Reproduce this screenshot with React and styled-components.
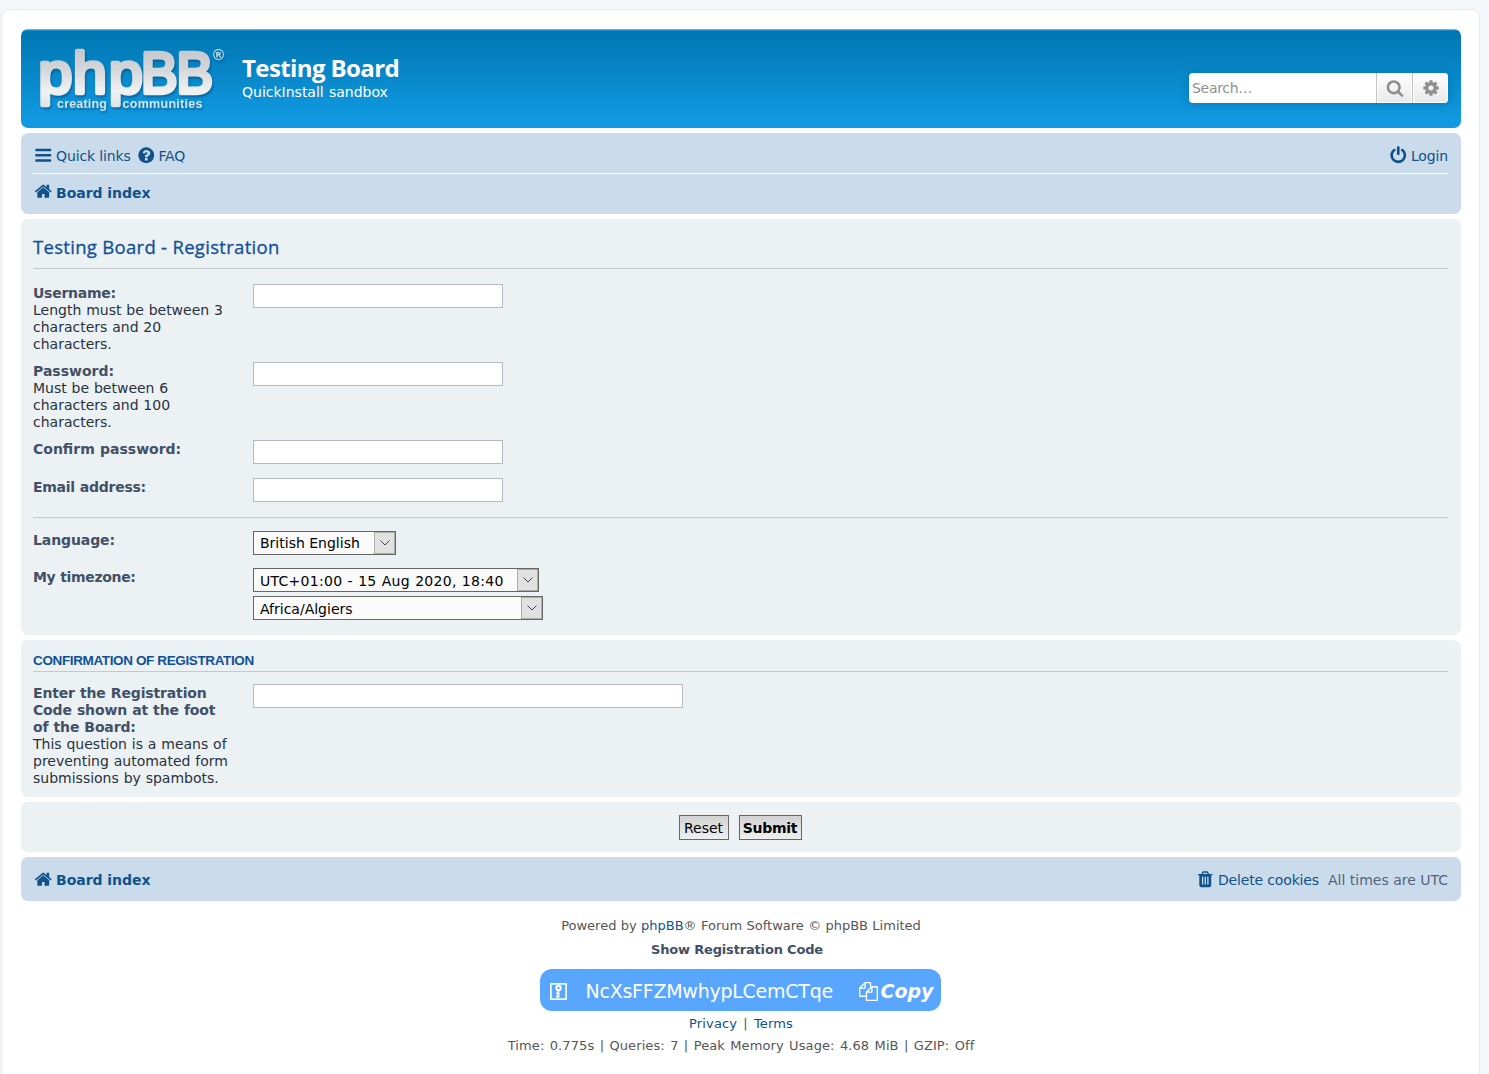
import React from 'react';
import styled, { createGlobalStyle } from 'styled-components';

const ICONS = {
  bars:
    'M1664 1344v128q0 26-19 45t-45 19h-1408q-26 0-45-19t-19-45v-128q0-26 19-45t45-19h1408q26 0 45 19t19 45zm0-512v128q0 26-19 45t-45 19h-1408q-26 0-45-19t-19-45v-128q0-26 19-45t45-19h1408q26 0 45 19t19 45zm0-512v128q0 26-19 45t-45 19h-1408q-26 0-45-19t-19-45v-128q0-26 19-45t45-19h1408q26 0 45 19t19 45z',
  question:
    'M1024 1376v-192q0-14-9-23t-23-9h-192q-14 0-23 9t-9 23v192q0 14 9 23t23 9h192q14 0 23-9t9-23zm256-672q0-88-55.5-163t-138.5-116-170-41q-243 0-371 213-15 24 8 42l132 100q7 6 19 6 16 0 25-12 53-68 86-92 34-24 86-24 48 0 85.5 26t37.5 59q0 38-20 61t-68 45q-63 28-115.5 86.5t-52.5 125.5v36q0 14 9 23t23 9h192q14 0 23-9t9-23q0-19 21.5-49.5t54.5-49.5q32-18 49-28.5t46-35 44.5-48 28-60.5 12.5-81zm384 192q0 209-103 385.5t-279.5 279.5-385.5 103-385.5-103-279.5-279.5-103-385.5 103-385.5 279.5-279.5 385.5-103 385.5 103 279.5 279.5 103 385.5z',
  home:
    'M1472 992v480q0 26-19 45t-45 19h-384v-384h-256v384h-384q-26 0-45-19t-19-45v-480q0-1 .5-3t.5-3l575-474 575 474q1 2 1 6zm223-69l-62 74q-8 9-21 11h-3q-13 0-21-7l-692-577-692 577q-12 8-24 7-13-2-21-11l-62-74q-8-10-7-23.5t11-21.5l719-599q32-26 76-26t76 26l244 204v-195q0-14 9-23t23-9h192q14 0 23 9t9 23v408l219 182q10 8 11 21.5t-7 23.5z',
  power:
    'M1664 896q0 156-61 298t-164 245-245 164-298 61-298-61-245-164-164-245-61-298q0-182 80.5-343t226.5-270q43-32 95.5-25t83.5 50q32 42 24.5 94.5t-49.5 84.5q-98 74-151.5 181t-53.5 228q0 104 40.5 198.5t109.5 163.5 163.5 109.5 198.5 40.5 198.5-40.5 163.5-109.5 109.5-163.5 40.5-198.5q0-121-53.5-228t-151.5-181q-42-32-49.5-84.5t24.5-94.5q31-43 84-50t95 25q146 109 226.5 270t80.5 343zm-640-768v640q0 52-38 90t-90 38-90-38-38-90v-640q0-52 38-90t90-38 90 38 38 90z',
  trash:
    'M704 1376v-704q0-14-9-23t-23-9h-64q-14 0-23 9t-9 23v704q0 14 9 23t23 9h64q14 0 23-9t9-23zm256 0v-704q0-14-9-23t-23-9h-64q-14 0-23 9t-9 23v704q0 14 9 23t23 9h64q14 0 23-9t9-23zm256 0v-704q0-14-9-23t-23-9h-64q-14 0-23 9t-9 23v704q0 14 9 23t23 9h64q14 0 23-9t9-23zm-544-992h448l-48-117q-7-9-17-11h-317q-10 2-17 11zm928 32v64q0 14-9 23t-23 9h-96v948q0 83-47 143.5t-113 60.5h-832q-66 0-113-58.5t-47-141.5v-952h-96q-14 0-23-9t-9-23v-64q0-14 9-23t23-9h309l70-167q15-37 54-63t79-26h320q40 0 79 26t54 63l70 167h309q14 0 23 9t9 23z',
  search:
    'M1216 832q0-185-131.5-316.5t-316.5-131.5-316.5 131.5-131.5 316.5 131.5 316.5 316.5 131.5 316.5-131.5 131.5-316.5zm512 832q0 52-38 90t-90 38q-54 0-90-38l-343-342q-179 124-399 124-143 0-273.5-55.5t-225-150-150-225-55.5-273.5 55.5-273.5 150-225 225-150 273.5-55.5 273.5 55.5 225 150 150 225 55.5 273.5q0 220-124 399l343 343q37 37 37 90z',
  cog:
    'M1152 896q0-106-75-181t-181-75-181 75-75 181 75 181 181 75 181-75 75-181zm512-109v222q0 12-8 23t-20 13l-185 28q-19 54-39 91 35 50 107 138 10 12 10 25t-9 23q-27 37-99 108t-94 71q-12 0-26-9l-138-108q-44 23-91 38-16 136-29 186-7 28-36 28h-222q-14 0-24.5-8.5t-11.5-21.5l-28-184q-49-16-90-37l-141 107q-10 9-25 9-14 0-25-11-126-114-165-168-7-10-7-23 0-12 8-23 15-21 51-66.5t54-70.5q-27-50-41-99l-183-27q-13-2-21-12.5t-8-23.5v-222q0-12 8-23t19-13l186-28q14-46 39-92-40-57-107-138-10-12-10-24 0-10 9-23 26-36 98.5-107.5t94.5-71.5q13 0 26 10l138 107q44-23 91-38 16-136 29-186 7-28 36-28h222q14 0 24.5 8.5t11.5 21.5l28 184q49 16 90 37l142-107q9-9 24-9 13 0 25 10 129 119 165 170 7 8 7 22 0 12-8 23-15 21-51 66.5t-54 70.5q26 50 41 98l183 28q13 2 21 12.5t8 23.5z',
  copy:
    'M1696 384q40 0 68 28t28 68v1216q0 40-28 68t-68 28h-960q-40 0-68-28t-28-68v-288h-544q-40 0-68-28t-28-68v-672q0-40 20-88t48-76l408-408q28-28 76-48t88-20h416q40 0 68 28t28 68v328q68-40 128-40h416zm-544 213l-299 299h299v-299zm-640-384l-299 299h299v-299zm196 647l316-316v-416h-384v416q0 40-28 68t-68 28h-416v640h512v-256q0-40 20-88t48-76zm956 804v-1152h-384v416q0 40-28 68t-68 28h-416v640h896z',
};

const Icon = ({ name, size = 18.5 }) => (
  <IconSvg $size={size} viewBox="0 0 1792 1792">
    <path d={ICONS[name]} />
  </IconSvg>
);

// x position, advance width and font size of each letter in the wordmark
const LETTERS = [
  ['p', -0.5, 33.7, 58],
  ['h', 34, 33.7, 58],
  ['p', 70, 33.7, 58],
  ['B', 102, 36.5, 57],
  ['B', 137.5, 36.5, 57],
];

const Logo = () => (
  <LogoSvg viewBox="0 0 190 68">
    <defs>
      <linearGradient id="metal" gradientUnits="userSpaceOnUse" x1="0" y1="0" x2="0" y2="58">
        <stop offset="0" stopColor="#c3c7cb" />
        <stop offset="0.35" stopColor="#d3d6d9" />
        <stop offset="0.75" stopColor="#f0f1f3" />
        <stop offset="1" stopColor="#e0e3e6" />
      </linearGradient>
    </defs>
    {LETTERS.map(([letter, x, width, size]) => (
      <React.Fragment key={x}>
        <LogoText
          x={x}
          y="44.5"
          fontSize={size}
          textLength={width}
          lengthAdjust="spacingAndGlyphs"
        >
          {letter}
        </LogoText>
      </React.Fragment>
    ))}
    <LogoSmall x="18" y="59.5" fontSize="12.5" textLength="50">
      creating
    </LogoSmall>
    <LogoSmall x="83.5" y="59.5" fontSize="12.5" textLength="80">
      communities
    </LogoSmall>
    <LogoSmall x="174" y="12" fontSize="15">
      ®
    </LogoSmall>
  </LogoSvg>
);

const KeyIcon = () => (
  <svg width="17" height="17" viewBox="0 0 17 17" fill="none" stroke="#fff">
    <rect x="0.9" y="0.9" width="15.2" height="15.2" strokeWidth="1.6" />
    <circle cx="8.5" cy="5" r="2.2" strokeWidth="2" />
    <path d="M8.5 7v7.5M8.5 10.3h-2.4M8.5 13.6h-2.4" strokeWidth="1.8" />
  </svg>
);

const Select = ({ width, tracking, low, children }) => (
  <SelectBox $width={width}>
    <SelectValue $tracking={tracking} $low={low}>
      {children}
    </SelectValue>
    <SelectArrow>
      <svg width="10" height="6" viewBox="0 0 10 6" fill="none" stroke="#444">
        <path d="M0.5 0.5L5 5L9.5 0.5" />
      </svg>
    </SelectArrow>
  </SelectBox>
);

const Field = ({ label, tracking, hint, height, children }) => (
  <Row $height={height}>
    <Term>
      <Label $tracking={tracking}>{label}</Label>
      {hint}
    </Term>
    <Controls>{children}</Controls>
  </Row>
);

const App = () => {
  return (
    <>
      <GlobalStyle />
      <Wrap>
        <Header>
          <Logo />
          <SiteDescription>
            <SiteTitle>Testing Board</SiteTitle>
            <Tagline>QuickInstall sandbox</Tagline>
          </SiteDescription>
          <SearchBox>
            <SearchInput placeholder="Search…" />
            <SearchButton>
              <Icon name="search" size={18} />
            </SearchButton>
            <SearchButton>
              <Icon name="cog" size={18} />
            </SearchButton>
          </SearchBox>
        </Header>

        <NavBar>
          <NavRow $height={35} $divider>
            <NavLink>
              <Icon name="bars" />
              <NavText>Quick links</NavText>
            </NavLink>
            <NavLink>
              <Icon name="question" />
              <NavText>FAQ</NavText>
            </NavLink>
            <Spacer />
            <NavLink>
              <Icon name="power" />
              <NavText>Login</NavText>
            </NavLink>
          </NavRow>
          <NavRow $height={36}>
            <NavLink $bold>
              <Icon name="home" />
              <NavText>Board index</NavText>
            </NavLink>
          </NavRow>
        </NavBar>

        <Panel $height={416}>
          <Title>Testing Board - Registration</Title>
          <Fields $top={15}>
            <Field
              label="Username:"
              tracking={-0.25}
              hint="Length must be between 3 characters and 20 characters."
              height={78}
            >
              <Input />
            </Field>
            <Field
              label="Password:"
              hint="Must be between 6 characters and 100 characters."
              height={78}
            >
              <Input type="password" />
            </Field>
            <Field label="Confirm password:" height={38}>
              <Input type="password" />
            </Field>
            <Field label="Email address:" tracking={-0.27} height={39}>
              <Input />
            </Field>
          </Fields>
          <Rule />
          <Fields $top={13}>
            <Field label="Language:" tracking={-0.1} height={37}>
              <Select width={143}>British English</Select>
            </Field>
            <Field label="My timezone:" tracking={-0.35} height={52}>
              <Select width={286} tracking={0.28} low>
                UTC+01:00 - 15 Aug 2020, 18:40
              </Select>
              <Select width={290} low>
                Africa/Algiers
              </Select>
            </Field>
          </Fields>
        </Panel>

        <Panel $height={157}>
          <Subtitle>Confirmation of registration</Subtitle>
          <Fields $top={12}>
            <Field
              label="Enter the Registration Code shown at the foot of the Board:"
              tracking={-0.15}
              hint="This question is a means of preventing automated form submissions by spambots."
              height={103}
            >
              <Input $width={430} />
            </Field>
          </Fields>
        </Panel>

        <ButtonPanel>
          <Button $width={50}>Reset</Button>
          <Button $width={63} $bold>
            Submit
          </Button>
        </ButtonPanel>

        <NavBar>
          <NavRow $height={35}>
            <NavLink $bold>
              <Icon name="home" />
              <NavText>Board index</NavText>
            </NavLink>
            <Spacer />
            <NavLink>
              <Icon name="trash" />
              <NavText>Delete cookies</NavText>
            </NavLink>
            <Times>All times are UTC</Times>
          </NavRow>
        </NavBar>

        <Footer>
          <Line $height={24} $word={0.2}>
            Powered by <a>phpBB</a>® Forum Software © phpBB Limited
          </Line>
          <ShowCode>Show Registration Code</ShowCode>
          <CodePill>
            <KeyIcon />
            <Code>NcXsFFZMwhypLCemCTqe</Code>
            <Icon name="copy" size={19} />
            <Copy>Copy</Copy>
          </CodePill>
          <Line $height={24} $word={1.8} $tracking={0.15}>
            <a>Privacy</a> | <a>Terms</a>
          </Line>
          <Line $height={20} $word={1.1} $tracking={0.1}>
            Time: 0.775s | Queries: 7 | Peak Memory Usage: 4.68 MiB | GZIP: Off
          </Line>
        </Footer>
      </Wrap>
    </>
  );
};

export default App;

const GlobalStyle = createGlobalStyle`
  * {
    box-sizing: border-box;
  }

  body {
    margin: 0;
    height: 1074px;
    overflow: hidden;
    background: #f5f7fa;
    color: #536482;
    font: 14px/17px 'DejaVu Sans', sans-serif;
  }

  a {
    color: #105289;
  }
`;

const Wrap = styled.div`
  width: 1479px;
  height: 1080px;
  margin: 9px 0 0 1px;
  padding: 19px 18px 0 19px;
  border: 1px solid #e6e9ed;
  border-radius: 8px;
  background: #fff;
`;

const Header = styled.div`
  display: flex;
  height: 99px;
  margin-bottom: 5px;
  padding: 0 13px 0 18px;
  border-radius: 7px;
  background: #119ae2
    linear-gradient(to bottom, #6aceff 0, #0076b1 2px, #119ae2 92px, #119ae2 100%);
  color: #fff;
`;

const IconSvg = styled.svg`
  width: ${(p) => p.$size}px;
  height: ${(p) => p.$size}px;
  fill: currentColor;
  flex: none;
`;

const LogoSvg = styled.svg`
  width: 190px;
  height: 68px;
  margin-top: 19px;
  overflow: visible;
  filter: drop-shadow(1px 2px 1px rgba(0, 50, 100, 0.45));
`;

const LogoText = styled.text`
  font-family: 'Liberation Sans', Arial, sans-serif;
  fill: url(#metal);
  stroke: url(#metal);
  stroke-width: 4.4px;
  stroke-linejoin: round;
`;

const LogoSmall = styled.text`
  font-family: 'Liberation Sans', Arial, sans-serif;
  font-weight: bold;
  fill: #d3e6f3;
`;

const SiteDescription = styled.div`
  margin: 24px 0 0 13px;
`;

const SiteTitle = styled.div`
  font: bold 24px/30px 'Open Sans', sans-serif;
  letter-spacing: -0.6px;
`;

const Tagline = styled.div`
  margin-top: 1px;
  word-spacing: 0.7px;
`;

const SearchBox = styled.div`
  display: flex;
  width: 259px;
  height: 30px;
  margin: 44px 0 0 auto;
  border-radius: 4px;
  overflow: hidden;
  box-shadow: 0 0 10px #0075b0;
`;

const SearchInput = styled.input`
  width: 187px;
  padding: 0 3px;
  border: 0;
  outline: 0;
  background: #fff;
  font: 14px 'DejaVu Sans', sans-serif;
  letter-spacing: -0.3px;

  &::placeholder {
    color: #8f8f8f;
    opacity: 1;
  }
`;

const SearchButton = styled.div`
  display: flex;
  align-items: center;
  justify-content: center;
  width: 36px;
  border-left: 1px solid #c7c3bf;
  background: linear-gradient(to bottom, #fff 0%, #e9e9e9 100%);
  box-shadow: 0 0 0 1px #fff inset;
  color: #8f8f8f;
`;

const NavBar = styled.div`
  margin-bottom: 5px;
  padding: 5px 13px 4px 12px;
  border-radius: 7px;
  background: #cadceb;
`;

const NavRow = styled.div`
  display: flex;
  align-items: center;
  height: ${(p) => p.$height + (p.$divider ? 1 : 0)}px;
  border-bottom: ${(p) => (p.$divider ? '1px solid #fff' : '0')};
`;

const NavLink = styled.div`
  display: flex;
  align-items: center;
  gap: 3px;
  margin-right: 6px;
  padding-left: 1px;
  color: #105289;
  font-weight: ${(p) => (p.$bold ? 'bold' : 'normal')};
  letter-spacing: ${(p) => (p.$bold ? '-0.05px' : '-0.15px')};

  &:last-child {
    margin-right: 0;
  }

  &:first-child {
    gap: 3.6px;
    margin-right: 5.4px;
  }

  svg {
    margin-bottom: 1px;
  }
`;

const NavText = styled.span`
  padding-top: 2px;
`;

const Spacer = styled.div`
  flex: 1;
`;

const Times = styled.div`
  margin-left: 3px;
  padding-top: 2px;
`;

const Panel = styled.div`
  height: ${(p) => p.$height}px;
  margin-bottom: 5px;
  padding: 0 13px 0 12px;
  border-radius: 7px;
  background: #ecf1f3;
  color: #28313f;
`;

const Title = styled.div`
  height: 50px;
  padding-top: 16px;
  border-bottom: 1px solid #c3cace;
  color: #115098;
  font: 500 18.5px/24px 'Open Sans', sans-serif;
  letter-spacing: 0.3px;
  -webkit-text-stroke: 0.3px #115098;
`;

const Subtitle = styled.div`
  height: 32px;
  padding-top: 12px;
  border-bottom: 1px solid #c3cace;
  color: #115098;
  font: bold 13.5px/17px 'Liberation Sans', Arial, sans-serif;
  letter-spacing: -0.37px;
  text-transform: uppercase;
`;

const Fields = styled.div`
  padding-top: ${(p) => p.$top}px;
`;

const Row = styled.div`
  display: flex;
  height: ${(p) => p.$height}px;
`;

const Term = styled.div`
  width: 220px;
  padding: 1px 20px 0 0;
  word-spacing: 0.4px;
`;

const Label = styled.div`
  color: #425067;
  font-weight: bold;
  letter-spacing: ${(p) => p.$tracking || 0}px;
`;

const Controls = styled.div`
  display: flex;
  flex-direction: column;
  align-items: flex-start;
  gap: 4px;
`;

const Input = styled.input`
  width: ${(p) => p.$width || 250}px;
  height: 24px;
  border: 1px solid #b4bac0;
  outline: 0;
  background: #fff;
`;

const Rule = styled.div`
  height: 1px;
  background: #c3cace;
`;

const SelectBox = styled.div`
  display: flex;
  width: ${(p) => p.$width}px;
  height: 24px;
  border: 1px solid #666;
  background: #fafafa;
  color: #000;
`;

const SelectValue = styled.div`
  flex: 1;
  padding-left: 6px;
  line-height: ${(p) => (p.$low ? 25 : 23)}px;
  letter-spacing: ${(p) => p.$tracking || 0}px;
  word-spacing: ${(p) => (p.$tracking ? 0.5 : 0)}px;
  white-space: nowrap;
`;

const SelectArrow = styled.div`
  display: flex;
  align-items: center;
  justify-content: center;
  width: 21px;
  border: 1px solid #adadad;
  background: #e1e1e1;
`;

const ButtonPanel = styled.div`
  display: flex;
  justify-content: center;
  gap: 10px;
  height: 50px;
  margin-bottom: 5px;
  padding: 13px 2px 0 0;
  border-radius: 7px;
  background: #ecf1f3;
`;

const Button = styled.button`
  width: ${(p) => p.$width}px;
  height: 25px;
  padding: 0;
  border: 1px solid #666;
  background: linear-gradient(to bottom, #d2d2d2, #efefef);
  color: #000;
  font: ${(p) => (p.$bold ? 'bold' : 'normal')} 14px 'DejaVu Sans', sans-serif;
  letter-spacing: ${(p) => (p.$bold ? '-0.3px' : '0')};
`;

const Footer = styled.div`
  display: flex;
  flex-direction: column;
  align-items: center;
  padding: 8px 0 0 0;
  color: #555;
  font-size: 13px;
`;

const Line = styled.div`
  line-height: ${(p) => p.$height}px;
  letter-spacing: ${(p) => p.$tracking || 0}px;
  word-spacing: ${(p) => p.$word}px;
`;

const ShowCode = styled.div`
  margin-right: 8px;
  color: #425067;
  font-weight: bold;
  line-height: 24px;
  letter-spacing: -0.17px;
`;

const CodePill = styled.div`
  display: flex;
  align-items: center;
  width: 401px;
  height: 42px;
  margin: 7px 2px 1px 0;
  padding: 2px 0 0 10px;
  border-radius: 12px;
  background: #58a6ff;
  color: #fff;
  font-size: 19px;
`;

const Code = styled.div`
  flex: none;
  width: 292px;
  padding-left: 19px;
  letter-spacing: -0.25px;
`;

const Copy = styled.div`
  margin-left: 3px;
  font-weight: bold;
  font-style: italic;
`;
